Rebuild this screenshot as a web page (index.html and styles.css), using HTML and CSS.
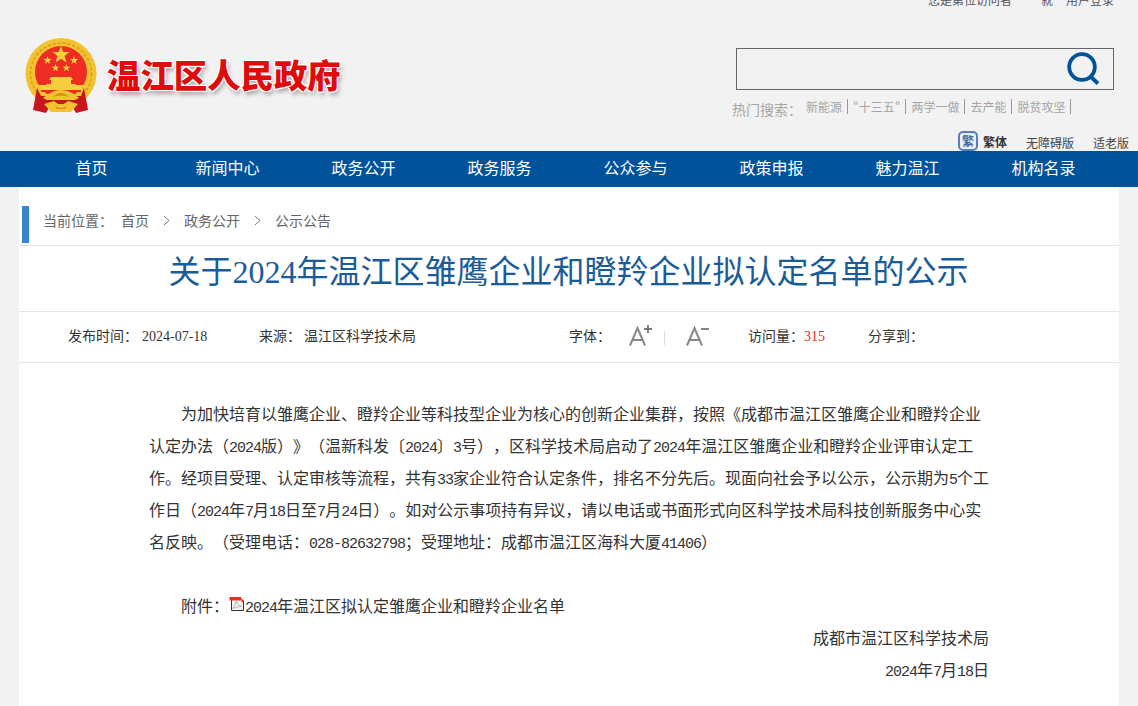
FILE: index.html
```
<!DOCTYPE html>
<html lang="zh-CN">
<head>
<meta charset="utf-8">
<title>关于2024年温江区雏鹰企业和瞪羚企业拟认定名单的公示</title>
<link rel="stylesheet" href="styles.css">
</head>
<body>
<header class="header">
  <div class="brand">
    <svg class="emblem" width="74" height="78" viewBox="0 0 74 78" aria-hidden="true">
      <circle cx="36" cy="35.5" r="35.5" fill="#f2c230"/>
      <circle cx="36" cy="35.5" r="30.500" fill="none" stroke="#dd9b16" stroke-width="1.500" stroke-dasharray="3 2"/>
      <circle cx="36" cy="34" r="26" fill="#ee2c24"/>
      <g fill="#f6cf3c">
        <polygon points="36,8 38.200,14 44.500,14 39.500,18 41.500,24.500 36,20.800 30.500,24.500 32.500,18 27.500,14 33.800,14"/>
        <polygon points="22.500,18 23.600,21 26.800,21 24.200,22.900 25.200,26 22.500,24.100 19.800,26 20.800,22.900 18.200,21 21.400,21"/>
        <polygon points="49,18 50.100,21 53.300,21 50.700,22.900 51.700,26 49,24.100 46.300,26 47.300,22.900 44.700,21 47.900,21"/>
        <polygon points="30.500,26 31.500,28.700 34.400,28.700 32.100,30.400 33,33.200 30.500,31.500 28,33.200 28.900,30.400 26.600,28.700 29.500,28.700"/>
        <polygon points="41.500,26 42.500,28.700 45.400,28.700 43.100,30.400 44,33.200 41.500,31.500 39,33.200 39.900,30.400 37.600,28.700 40.500,28.700"/>
        <path d="M26 39 H46 L48 42 H46 V46 H50 L51 47 H21 L22 46 H26 V42 H24 Z"/>
        <path d="M13 47 H59 L56 52 H16 Z"/>
        <rect x="16" y="52" width="40" height="2" fill="#ee2c24"/>
      </g>
      <path d="M12 50 L8 72 L21 75 L26 66 H46 L51 75 L63 72 L59 50 L56 58 H16 Z" fill="#c8161d"/>
      <path d="M18 60 Q36 44 54 60 L50 62 H22 Z" fill="#f2c230"/>
      <path d="M28 59 Q36 51 44 59 Q36 56 28 59 Z" fill="#d98c14"/>
      <path d="M19 66 L29 63 L36 68 L43 63 L53 66 L46 74 H26 Z" fill="#f2c230"/>
      <path d="M30 68 Q36 72 42 68 L40 71 H32 Z" fill="#d98c14"/>
    </svg>
    <div class="site-name">温江区人民政府</div>
  </div>
  <div class="header-right">
    <div class="top-links">
      <span class="visitor">您是第位访问者</span>
      <a class="jiu">就</a>
      <a class="login">用户登录</a>
    </div>
    <form class="search">
      <svg class="search-icon" width="34" height="34" viewBox="0 0 34 34" aria-hidden="true">
        <circle cx="15" cy="15" r="12.800" fill="none" stroke="#00539a" stroke-width="3.800"/>
        <line x1="23.500" y1="24.500" x2="31" y2="31.500" stroke="#00539a" stroke-width="3.800"/>
      </svg>
    </form>
    <div class="hot">
      <span class="hot-label">热门搜索：</span>
      <a>新能源</a><a>"十三五"</a><a>两学一做</a><a>去产能</a><a>脱贫攻坚</a>
    </div>
    <div class="tools">
      <span class="fan-badge">繁</span>
      <a class="fan">繁体</a>
      <a class="wza">无障碍版</a>
      <a class="old">适老版</a>
    </div>
  </div>
</header>
<nav class="nav">
  <a>首页</a><a>新闻中心</a><a>政务公开</a><a>政务服务</a><a>公众参与</a><a>政策申报</a><a>魅力温江</a><a>机构名录</a>
</nav>
<main class="main">
  <div class="crumbs">
    <span class="crumb-bar"></span>
    <span class="crumb-label">当前位置：</span>
    <a>首页</a>
    <svg class="chev" width="7" height="11" viewBox="0 0 7 11" aria-hidden="true"><polyline points="1,1 6,5.500 1,10" fill="none" stroke="#777" stroke-width="1"/></svg>
    <a>政务公开</a>
    <svg class="chev" width="7" height="11" viewBox="0 0 7 11" aria-hidden="true"><polyline points="1,1 6,5.500 1,10" fill="none" stroke="#777" stroke-width="1"/></svg>
    <a>公示公告</a>
  </div>
  <h1 class="title">关于2024年温江区雏鹰企业和瞪羚企业拟认定名单的公示</h1>
  <div class="meta">
    <span class="lab m-date-label">发布时间：</span><span class="m-date">2024-07-18</span>
    <span class="lab m-source-label">来源：</span><span class="lab m-source">温江区科学技术局</span>
    <span class="lab m-font">字体：</span>
    <svg class="a-plus" width="24" height="22" viewBox="0 0 24 22" aria-hidden="true">
      <path d="M1 20.500 L8.500 3 L16 20.500 M3.500 15 H13.500" fill="none" stroke="#888" stroke-width="2"/>
      <path d="M15 4 H23 M19 0 V8" fill="none" stroke="#777" stroke-width="1.800"/>
    </svg>
    <span class="a-sep"></span>
    <svg class="a-minus" width="24" height="22" viewBox="0 0 24 22" aria-hidden="true">
      <path d="M1 20.500 L8.500 3 L16 20.500 M3.500 15 H13.500" fill="none" stroke="#888" stroke-width="2"/>
      <path d="M15 4 H23" fill="none" stroke="#777" stroke-width="1.800"/>
    </svg>
    <span class="lab m-visits">访问量：</span><span class="m-count">315</span>
    <span class="lab m-share">分享到：</span>
  </div>
  <article class="content">
    <p class="indent">为加快培育以雏鹰企业、瞪羚企业等科技型企业为核心的创新企业集群，按照《成都市温江区雏鹰企业和瞪羚企业认定办法（<span class="n">2024</span>版）》（温新科发〔<span class="n">2024</span>〕<span class="n">3</span>号），区科学技术局启动了<span class="n">2024</span>年温江区雏鹰企业和瞪羚企业评审认定工作。经项目受理、认定审核等流程，共有<span class="n">33</span>家企业符合认定条件，排名不分先后。现面向社会予以公示，公示期为<span class="n">5</span>个工作日（<span class="n">2024</span>年<span class="n">7</span>月<span class="n">18</span>日至<span class="n">7</span>月<span class="n">24</span>日）。如对公示事项持有异议，请以电话或书面形式向区科学技术局科技创新服务中心实名反映。（受理电话：<span class="n">028-82632798</span>；受理地址：成都市温江区海科大厦<span class="n">41406</span>）</p>
    <p class="attach">附件：<svg class="pdf" width="16" height="16" viewBox="0 0 16 16" aria-hidden="true">
      <path d="M2.500 1.500 H11 L14.500 5 V14.500 H2.500 Z" fill="#f4f4f4" stroke="#333"/>
      <path d="M4 12.500 C6 10 7 7 7 5 C8 8 9.500 10 13 10.500 C10 10.500 7 11 4 12.500 Z" fill="none" stroke="#b5b5b5"/>
      <rect x="0.500" y="1" width="11.500" height="3.500" fill="#e8321c"/>
      <rect x="12.500" y="4" width="2.500" height="2" fill="#e8321c"/>
    </svg><span class="n">2024</span>年温江区拟认定雏鹰企业和瞪羚企业名单</p>
    <p class="sign">成都市温江区科学技术局</p>
    <p class="sign"><span class="n">2024</span>年<span class="n">7</span>月<span class="n">18</span>日</p>
  </article>
</main>
</body>
</html>
```
FILE: styles.css
```
html, body {
  margin: 0;
  padding: 0;
  height: 706px;
  overflow: hidden;
  background: #f2f2f2;
  font-family: "Noto Sans CJK SC", "Liberation Sans", sans-serif;
  color: #333;
  text-spacing-trim: space-all;
}
.header {
  height: 151px;
  display: flex;
  justify-content: space-between;
  overflow: hidden;
}
.brand {
  display: flex;
  align-items: flex-start;
  padding: 38px 0 0 25px;
}
.emblem {
  flex: none;
}
.site-name {
  margin: 13px 0 0 8px;
  font-size: 33.4px;
  line-height: 46px;
  font-weight: 900;
  color: #e00b0b;
  letter-spacing: 0;
  text-shadow: 1px 1px 0 #fff, -1px -1px 0 #fff, 1px -1px 0 #fff, -1px 1px 0 #fff, 2px 4px 4px #aaa;
}
.header-right {
  width: 402px;
  display: flex;
  flex-direction: column;
  flex: none;
}
.top-links {
  display: flex;
  height: 12px;
  margin-top: -6px;
  font-size: 12px;
  line-height: 12px;
  color: #555;
  padding-left: 192px;
}
.jiu {
  margin-left: 29px;
}
.login {
  margin-left: 13px;
}
.search {
  box-sizing: border-box;
  width: 378px;
  height: 42px;
  margin: 42px 0 0 0;
  border: 1px solid #666;
  display: flex;
  justify-content: flex-end;
  padding: 3px 12px 0 0;
}
.search-icon {
  display: block;
}
.hot {
  display: flex;
  align-items: flex-start;
  height: 32px;
  margin: 9px 0 0 -4px;
}
.hot-label {
  font-size: 14px;
  line-height: 20px;
  margin: 0 11px 0 0;
  color: #a5a5a5;
  width: 63px;
  white-space: nowrap;
}
.hot a {
  font-size: 12px;
  line-height: 15px;
  padding: 0 5px 0 5px;
  border-right: 1px solid #999;
  color: #a5a5a5;
  white-space: nowrap;
}
.hot a:first-of-type {
  padding-left: 0;
}
.tools {
  display: flex;
  align-items: center;
  height: 20px;
  margin-left: 222px;
  font-size: 12px;
  line-height: 20px;
  color: #333;
}
.fan-badge {
  box-sizing: border-box;
  width: 20px;
  height: 20px;
  border: 2px solid #5b7db4;
  border-radius: 5px;
  background: #e6edf7;
  color: #43689f;
  font-size: 12px;
  line-height: 16px;
  font-weight: 700;
  text-align: center;
}
.fan {
  margin-left: 5px;
  font-weight: 700;
  margin-top: 1px;
}
.wza {
  margin-left: 19px;
  margin-top: 4px;
  color: #444;
}
.old {
  margin-left: 19px;
  margin-top: 4px;
  color: #444;
}
.nav {
  height: 36px;
  background: #00539a;
  display: flex;
  padding-left: 23.5px;
}
.nav a {
  width: 136px;
  text-align: center;
  color: #fff;
  font-size: 16px;
  line-height: 33px;
}
.main {
  width: 1100px;
  height: 519px;
  margin-left: 19px;
  background: #fff;
}
.crumbs {
  box-sizing: border-box;
  height: 59px;
  border-bottom: 1px solid #e5e5e5;
  display: flex;
  align-items: center;
  font-size: 14px;
  color: #666;
  padding: 8px 0 0 3px;
}
.crumb-bar {
  width: 7px;
  height: 37px;
  background: #3a85cc;
  margin: 8px 14px 0 0;
}
.crumb-label {
  margin-right: 8px;
  width: 70px;
}
.crumbs a {
  white-space: nowrap;
}
.chev {
  margin: 0 14px;
}
.title {
  box-sizing: border-box;
  height: 66px;
  margin: 0;
  padding-right: 1px;
  border-bottom: 1px solid #e5e5e5;
  text-align: center;
  font-family: "Liberation Serif", "Noto Sans CJK SC", serif;
  font-size: 32px;
  font-weight: 400;
  line-height: 52px;
  color: #1a5c99;
}
.meta {
  box-sizing: border-box;
  height: 51px;
  border-bottom: 1px solid #e5e5e5;
  display: flex;
  align-items: center;
  padding-left: 49px;
  font-size: 14px;
  color: #333;
  white-space: nowrap;
}
.lab {
  margin-bottom: 4px;
}
.m-date, .m-count {
  font-family: "Liberation Serif", serif;
}
.m-date-label {
  width: 74px;
}
.m-date {
  width: 117px;
}
.m-source-label {
  width: 45px;
}
.m-source {
  width: 265px;
}
.m-font {
  width: 60px;
}
.a-plus {
  margin: 0 11px 2px 0;
}
.a-sep {
  width: 1px;
  height: 14px;
  margin-top: 2px;
  background: #ddd;
}
.a-minus {
  margin: 0 0 2px 21px;
}
.m-visits {
  margin-left: 38px;
  width: 56px;
}
.m-count {
  color: #d92b2b;
  width: 64px;
}
.content {
  padding: 34px 0 0 130px;
  width: 844px;
  font-size: 16px;
  line-height: 32px;
  color: #333;
  font-weight: 400;
}
.content p {
  margin: 0;
}
.indent {
  text-indent: 32px;
}
.n {
  font-family: "Liberation Mono", monospace;
  font-size: 15px;
  letter-spacing: -1px;
  line-height: 0;
}
.attach {
  margin-top: 32px !important;
  padding-left: 32px;
  line-height: 32px;
}
.pdf {
  vertical-align: 0;
}
.sign {
  text-align: right;
  width: 840px;
}
```
